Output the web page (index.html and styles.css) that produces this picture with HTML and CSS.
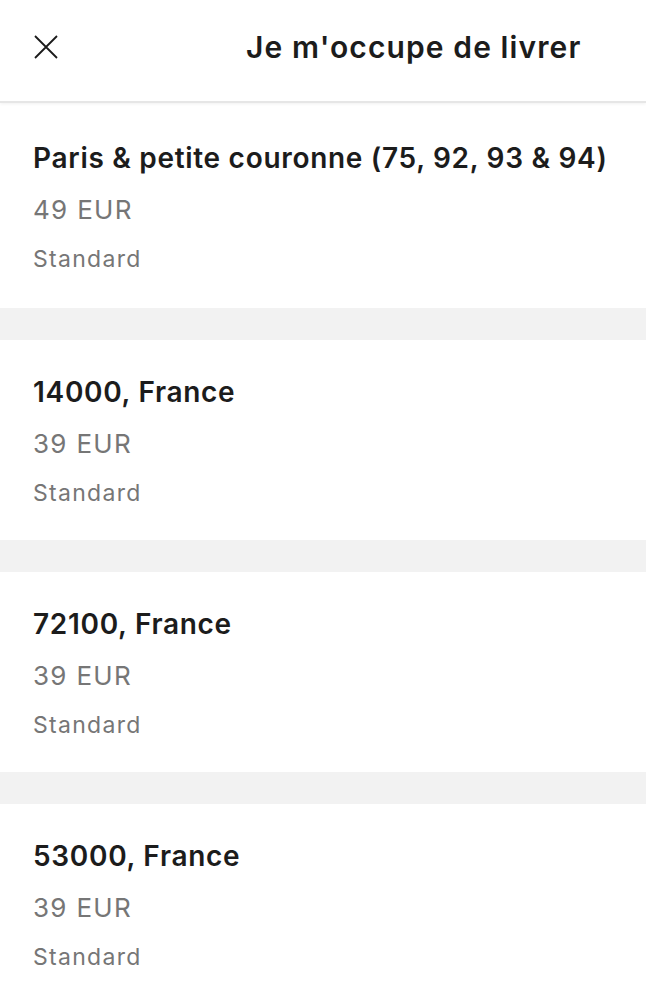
FILE: index.html
```html
<!DOCTYPE html>
<html lang="fr">
<head>
  <meta charset="UTF-8">
  <meta name="viewport" content="width=device-width, initial-scale=1.0">
  <title>Je m'occupe de livrer</title>
  <link rel="stylesheet" href="styles.css">
</head>
<body>
  <div class="sheet">
    <header class="topbar">
      <button class="close" aria-label="Fermer">
        <svg width="24" height="24" viewBox="0 0 24 24">
          <path d="M1 1 L23 23 M23 1 L1 23" stroke="#1a1a1a" stroke-width="1.8" fill="none"/>
        </svg>
      </button>
      <h1 class="title">Je m'occupe de livrer</h1>
    </header>

    <div class="list">
      <div class="item first">
        <div class="name">Paris &amp; petite couronne (75, 92, 93 &amp; 94)</div>
        <div class="price">49 EUR</div>
        <div class="type">Standard</div>
      </div>
      <div class="item">
        <div class="name">14000, France</div>
        <div class="price">39 EUR</div>
        <div class="type">Standard</div>
      </div>
      <div class="item">
        <div class="name">72100, France</div>
        <div class="price">39 EUR</div>
        <div class="type">Standard</div>
      </div>
      <div class="item">
        <div class="name">53000, France</div>
        <div class="price">39 EUR</div>
        <div class="type">Standard</div>
      </div>
    </div>
  </div>
</body>
</html>
```

FILE: styles.css
```css
body {
  margin: 0;
  font-family: Inter, "Noto Sans", sans-serif;
  background: #fff;
  color: #1c1c1c;
}
.sheet {
  background: #f2f2f2;
  min-height: 100vh;
  overflow: hidden;
}
.topbar {
  display: flex;
  align-items: center;
  box-sizing: border-box;
  height: 103px;
  padding-bottom: 8px;
  background: #fff;
  border-bottom: 2px solid #e6e6e6;
  box-shadow: 0 1px 3px rgba(0,0,0,0.06);
  position: relative;
  z-index: 1;
}
.close {
  border: none;
  background: none;
  padding: 0;
  margin-left: 34px;
  width: 24px;
  height: 24px;
  cursor: pointer;
}
.close svg {
  display: block;
}
.title {
  margin: 0 0 0 188px;
  font-size: 30px;
  font-weight: 600;
  letter-spacing: 1.1px;
}
.list {
  display: flex;
  flex-direction: column;
  gap: 32px;
}
.item {
  background: #fff;
  padding: 32px 33px 29px;
}
.item.first {
  padding-top: 35px;
  padding-bottom: 31px;
}
.name {
  font-size: 28px;
  font-weight: 600;
  line-height: 40px;
  letter-spacing: 0.7px;
}
.price {
  font-size: 26px;
  line-height: 63px;
  letter-spacing: 1.3px;
  color: #767676;
}
.type {
  font-size: 23px;
  line-height: 36px;
  letter-spacing: 1.3px;
  color: #767676;
}
```
